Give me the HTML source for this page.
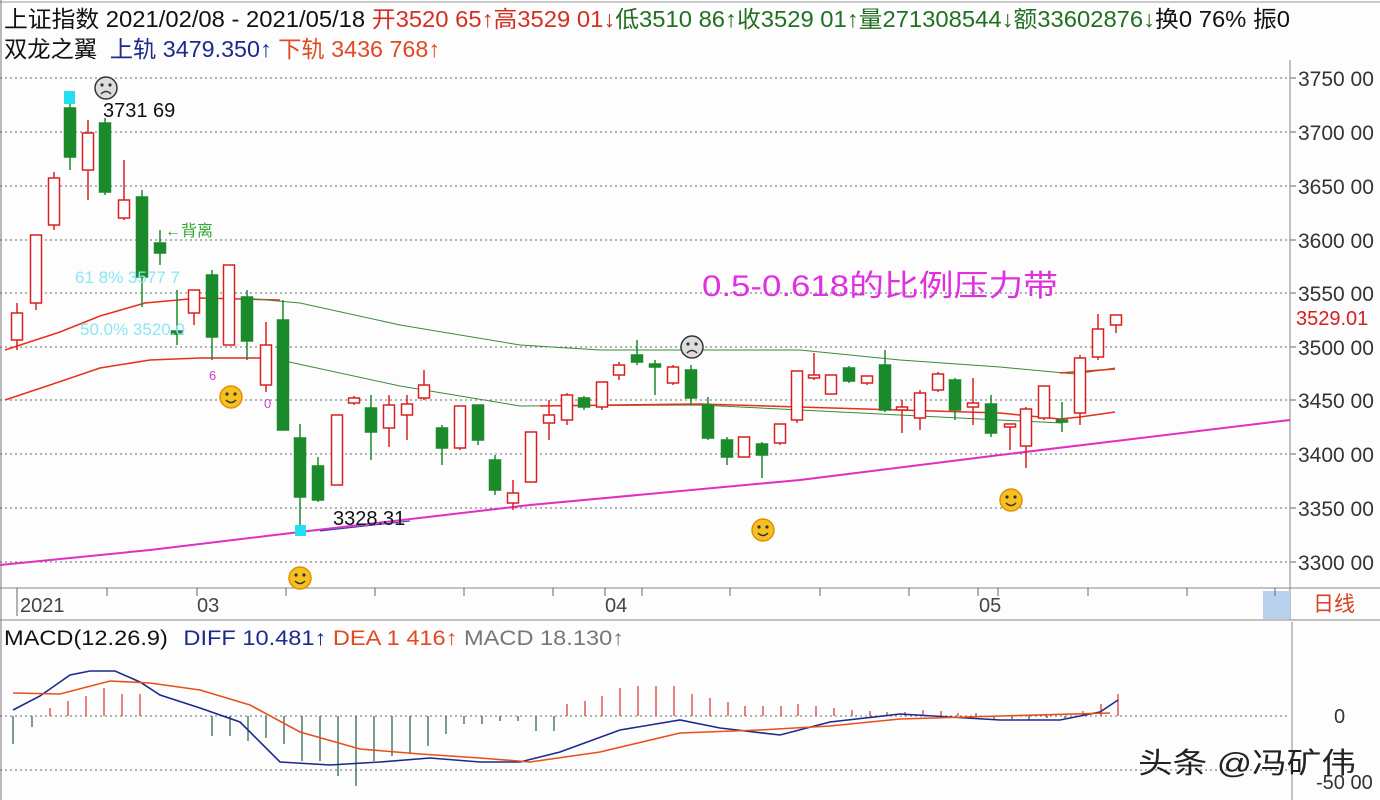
<!DOCTYPE html>
<html><head><meta charset="utf-8"><style>
html,body{margin:0;padding:0;background:#fff;width:1380px;height:800px;overflow:hidden;font-family:"Liberation Sans","Noto Sans CJK SC",sans-serif}
svg{position:absolute;left:0;top:0}
</style></head><body>
<svg id="s" width="1380" height="800" xmlns="http://www.w3.org/2000/svg" font-family="Liberation Sans, Noto Sans CJK SC, sans-serif">
<rect x="0" y="0" width="1380" height="800" fill="#fdfdfe"/>
<line x1="0" y1="2" x2="1380" y2="2" stroke="#999"/>
<line x1="1" y1="0" x2="1" y2="800" stroke="#777"/>
<line x1="1290" y1="60" x2="1290" y2="620" stroke="#888"/>
<line x1="0" y1="588" x2="1380" y2="588" stroke="#888"/>
<line x1="0" y1="620" x2="1380" y2="620" stroke="#888"/>
<line x1="1292" y1="622" x2="1292" y2="800" stroke="#888"/>
<rect x="1263" y="591" width="27" height="28" fill="#b8d2ee"/>
<g id="grid" stroke="#666" stroke-dasharray="2,3" stroke-width="1"></g>
<g font-size="21" fill="#333" id="ax"></g>
<text x="1296" y="325" font-size="20" fill="#d52020">3529.01</text>
<text x="1313" y="611" font-size="21" fill="#d84020">日线</text>
<text x="1334" y="723" font-size="20" fill="#333">0</text>
<text x="1316" y="789" font-size="20" fill="#333">-50 00</text>
<g stroke="#666" id="ticks"></g>
<text x="20" y="612" font-size="20" fill="#444">2021</text>
<text x="197" y="612" font-size="20" fill="#444">03</text>
<text x="605" y="612" font-size="20" fill="#444">04</text>
<text x="979" y="612" font-size="20" fill="#444">05</text>
<text x="4" y="27" font-size="23" fill="#111" textLength="1286" lengthAdjust="spacingAndGlyphs">上证指数 <tspan>2021/02/08 - 2021/05/18</tspan> <tspan fill="#d43020">开3520 65↑高3529 01↓</tspan><tspan fill="#207020">低3510 86↑收3529 01↑量271308544↓额33602876↓</tspan><tspan>换0 76% 振0</tspan></text>
<text x="4" y="57" font-size="23" fill="#111" textLength="436" lengthAdjust="spacingAndGlyphs">双龙之翼 <tspan fill="#1c2a8c" dx="6">上轨 3479.350↑</tspan> <tspan fill="#e04a20">下轨 3436 768↑</tspan></text>
<text x="4" y="645" font-size="21" fill="#111" textLength="620" lengthAdjust="spacingAndGlyphs">MACD(12.26.9) <tspan fill="#1c2a8c" dx="8">DIFF 10.481↑</tspan> <tspan fill="#e04a20">DEA 1 416↑</tspan> <tspan fill="#777">MACD 18.130↑</tspan></text>
<line x1="0" y1="716" x2="1290" y2="716" stroke="#666" stroke-dasharray="2,3"/>
<line x1="0" y1="770" x2="1290" y2="770" stroke="#666" stroke-dasharray="2,3"/>
<g id="hist"></g>
<polyline fill="none" stroke="#e8301a" stroke-width="1.5" points="5,350 60,332 100,316 145,303 200,298 280,300"/>
<polyline fill="none" stroke="#e8301a" stroke-width="1.5" points="5,400 50,385 100,368 150,360 200,358 270,358"/>
<polyline fill="none" stroke="#3a8a3a" stroke-width="1" points="245,298 300,303 400,325 520,345 600,350 800,350 900,360 1000,367 1075,374 1115,368"/>
<polyline fill="none" stroke="#3a8a3a" stroke-width="1" points="280,360 400,386 520,406 700,405 800,410 1000,420 1062,423"/>
<polyline fill="none" stroke="#e8301a" stroke-width="1.5" points="540,406 700,404 900,410 1000,413 1060,419 1080,417 1115,412"/>
<polyline fill="none" stroke="#e8301a" stroke-width="1.5" points="1060,373 1115,369"/>
<polyline fill="none" stroke="#e030c0" stroke-width="2" points="0,565 150,550 300,532 530,505 800,480 1000,455 1290,420"/>
<g id="c"></g>
<polyline fill="none" stroke="#1c2a8c" stroke-width="1.6" points="13,710 40,696 70,675 90,671 115,671 140,682 160,695 200,708 240,722 280,762 330,765 380,762 430,758 480,762 520,762 560,752 620,730 680,720 720,728 780,735 830,722 900,714 1000,720 1060,720 1100,712 1118,700"/>
<polyline fill="none" stroke="#e8501a" stroke-width="1.6" points="13,693 60,694 110,681 150,683 200,690 250,705 300,732 360,749 420,754 480,758 530,762 600,752 680,733 760,730 830,726 900,719 1000,716 1110,713"/>
<text x="103" y="117" font-size="20" fill="#111">3731 69</text>
<text x="333" y="525" font-size="20" fill="#111">3328.31</text>
<text x="75" y="283" font-size="17" fill="#8ce6f4">61 8% 3577 7</text>
<text x="80" y="335" font-size="17" fill="#8ce6f4">50.0% 3520.0</text>
<text x="165" y="236" font-size="16" fill="#33aa33">←背离</text>
<text x="209" y="380" font-size="13" fill="#d040d0">6</text>
<text x="264" y="408" font-size="13" fill="#d040d0">0</text>
<text x="702" y="296" font-size="30" fill="#e030e0" textLength="356" lengthAdjust="spacingAndGlyphs">0.5-0.618的比例压力带</text>
<rect x="64" y="91" width="11" height="13" fill="#22e0f0"/>
<rect x="295" y="525" width="11" height="11" fill="#22e0f0"/>
<line x1="320" y1="531" x2="410" y2="521" stroke="#3030a0"/>
<g id="sm"></g>
<text x="1138" y="773" font-size="29" fill="#222" textLength="218" lengthAdjust="spacingAndGlyphs">头条 @冯矿伟</text>
</svg>
<script>
var NS="http://www.w3.org/2000/svg";
function el(p,t,a){var e=document.createElementNS(NS,t);for(var k in a)e.setAttribute(k,a[k]);document.getElementById(p).appendChild(e);return e;}
var ys=[78,132,186,240,293,347,400,454,508,562],lab=["3750 00","3700 00","3650 00","3600 00","3550 00","3500 00","3450 00","3400 00","3350 00","3300 00"];
ys.forEach(function(y,i){el("grid","line",{x1:0,y1:y,x2:1290,y2:y});el("ticks","line",{x1:1290,y1:y,x2:1296,y2:y});var t=el("ax","text",{x:1298,y:y+8});t.textContent=lab[i];});
[17,107,197,286,375,464,553,605,642,730,820,909,978,998,1088,1187,1275].forEach(function(x){el("ticks","line",{x1:x,y1:588,x2:x,y2:596});});
el("ticks","line",{x1:17,y1:588,x2:17,y2:616});
var C=[[17,'r',313,340,303,350],[36,'r',235,303,235,310],[54,'r',178,225,172,230],[70,'g',108,157,104,170],[88,'r',133,170,120,200],[105,'g',123,192,118,195],[124,'r',200,218,160,220],[142,'g',197,277,190,307],[160,'g',243,253,230,265],[177,'g',331,334,290,345],[194,'r',290,313,290,325],[212,'g',275,337,270,360],[229,'r',265,345,265,345],[247,'g',297,341,290,360],[266,'r',345,385,322,392],[283,'g',320,430,300,430],[300,'g',438,497,424,530],[318,'g',466,500,457,502],[337,'r',415,485,415,485],[354,'r',398,403,396,405],[371,'g',408,432,395,460],[389,'r',405,428,395,447],[407,'r',404,415,395,440],[424,'r',385,398,370,400],[442,'g',428,448,425,465],[460,'r',406,448,406,450],[478,'g',405,440,405,445],[495,'g',460,490,455,495],[513,'r',493,503,480,510],[531,'r',432,482,432,482],[549,'r',415,423,400,440],[567,'r',395,420,393,425],[584,'g',398,407,396,410],[602,'r',382,407,382,410],[619,'r',365,375,362,380],[637,'g',355,362,340,365],[655,'g',364,367,360,395],[673,'r',367,383,365,385],[691,'g',370,398,365,405],[708,'g',405,438,397,440],[727,'g',440,457,437,465],[744,'r',437,457,437,457],[762,'g',444,455,442,478],[780,'r',424,443,424,445],[797,'r',371,420,371,423],[814,'r',375,378,353,380],[831,'r',375,394,375,394],[849,'g',368,381,366,383],[867,'r',376,383,376,385],[885,'g',365,410,350,412],[902,'r',407,410,400,433],[920,'r',393,418,390,430],[938,'r',374,390,372,392],[955,'g',380,410,378,420],[973,'r',403,407,378,425],[991,'g',404,433,395,437],[1010,'r',424,427,424,450],[1026,'r',409,446,407,468],[1044,'r',386,418,386,420],[1062,'g',420,422,402,432],[1080,'r',358,413,355,425],[1098,'r',329,357,314,360],[1116,'r',315,325,315,333]];
C.forEach(function(c){var col=c[1]=='r'?'#d82020':'#1a8a2a';el("c","line",{x1:c[0],y1:c[4],x2:c[0],y2:c[5],stroke:col,"stroke-width":1.5});
el("c","rect",{x:c[0]-5.5,y:c[2],width:11,height:Math.max(2,c[3]-c[2]),fill:c[1]=='r'?'#fff':col,stroke:col,"stroke-width":1.5});});
var H2=[[567,12],[585,15],[602,20],[620,28],[638,30],[656,30],[674,30],[692,22],[710,18],[728,14],[745,10],[763,10],[781,10],[798,12],[816,10],[834,8],[852,6],[870,5],[887,4],[905,4],[923,6],[941,5],[958,3],[976,3],[994,-3],[1012,-3],[1029,-4],[1047,-2],[1065,-2],[1083,5],[1101,12],[1118,22]];
var xs=[13,32,50,68,86,104,122,140,158,176,194,212,230,248,266,284,302,320,338,356,374,392,410,428,446,464,482,500,518,536,554];
var hv=[-28,-11,8,15,20,28,22,22,0,0,0,-20,-20,-25,-22,-28,-45,-45,-60,-70,-45,-40,-37,-30,-18,-8,-8,-5,-5,-15,-15];
xs.forEach(function(x,i){var v=hv[i];if(!v)return;el("hist","line",{x1:x,y1:716,x2:x,y2:716-v*1.0,stroke:v>0?'#d83030':'#1f5f3f',"stroke-width":1.2});});
H2.forEach(function(h){el("hist","line",{x1:h[0],y1:716,x2:h[0],y2:716-h[1],stroke:h[1]>0?'#d83030':'#1f5f3f',"stroke-width":1.2});});
function smile(x,y,sad){
el("sm","circle",{cx:x,cy:y,r:11,fill:sad?'#ddd':'#f5c020',stroke:sad?'#333':'#e09000',"stroke-width":1.5});
el("sm","circle",{cx:x-4,cy:y-3,r:1.6,fill:'#333'});el("sm","circle",{cx:x+4,cy:y-3,r:1.6,fill:'#333'});
el("sm","path",{d:sad?"M"+(x-5)+","+(y+6)+" Q"+x+","+(y+1)+" "+(x+5)+","+(y+6):"M"+(x-5)+","+(y+3)+" Q"+x+","+(y+8)+" "+(x+5)+","+(y+3),fill:'none',stroke:'#333',"stroke-width":1.5});}
smile(106,88,true);smile(692,347,true);smile(231,397);smile(300,578);smile(763,530);smile(1011,500);
</script>
</body></html>
